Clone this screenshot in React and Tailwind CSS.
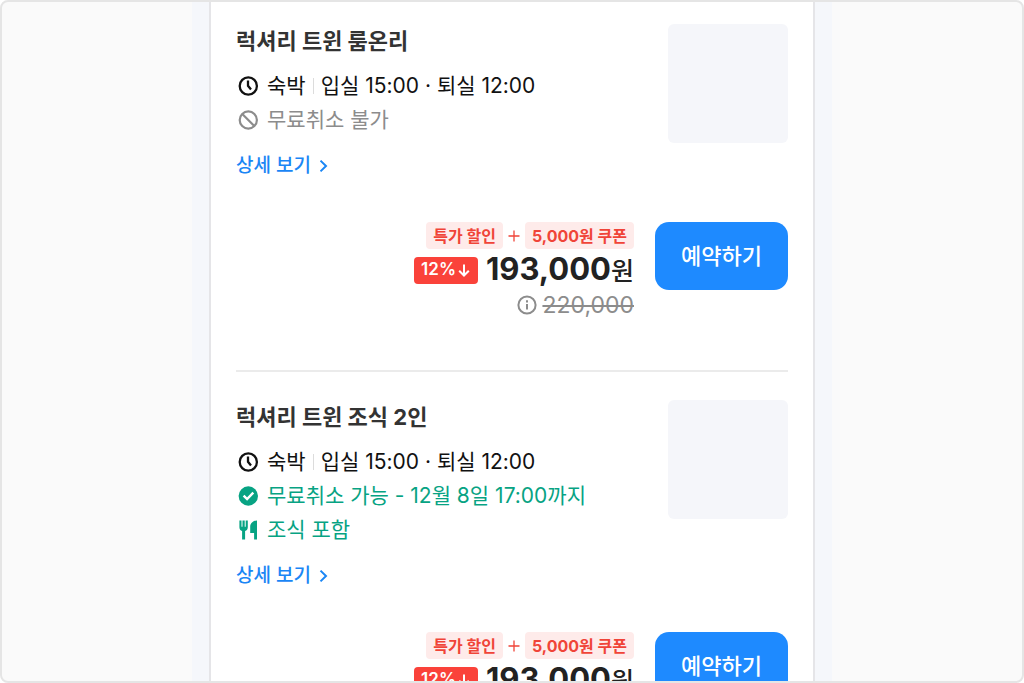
const FONT = "font-[Inter,'Noto_Sans_CJK_KR',sans-serif]";

function ClockIcon() {
  return (
    <svg viewBox="0 0 24 24" className="size-6 shrink-0" fill="none" stroke="currentColor" strokeWidth="2.3" aria-hidden="true">
      <circle cx="12.3" cy="12" r="8.6" />
      <path d="M12 6.600v5.200l3 3.600" />
    </svg>
  );
}

function BlockedIcon() {
  return (
    <svg viewBox="0 0 24 24" className="size-6 shrink-0" fill="none" stroke="currentColor" strokeWidth="2.2" aria-hidden="true">
      <circle cx="12.3" cy="12" r="8.6" />
      <path d="M6.3 6l12 12" />
    </svg>
  );
}

function CheckIcon() {
  return (
    <svg viewBox="0 0 24 24" className="size-6 shrink-0" fill="none" aria-hidden="true">
      <circle cx="12.3" cy="12" r="9.7" fill="currentColor" />
      <path d="M7.6 11.600l3.500 3.500 6.200-6.400" stroke="white" strokeWidth="2.4" />
    </svg>
  );
}

function MealIcon() {
  return (
    <svg viewBox="0 0 24 24" className="size-6 shrink-0" fill="currentColor" aria-hidden="true">
      <path d="M3.400 2.400h2.100v6.400h1V2.400h2.200v6.400h1V2.400h2.100v6.800c0 2-1 3.300-2.700 3.800V21.600H6.100V13C4.400 12.500 3.400 11.200 3.400 9.200z" />
      <path d="M21 2.400v19.200h-2.900v-6.600h-3.900V8.600c0-3.200 2.700-5.900 6.800-6.200z" />
    </svg>
  );
}

function InfoIcon() {
  return (
    <svg viewBox="0 0 24 24" className="size-6 shrink-0" fill="none" stroke="currentColor" strokeWidth="2" aria-hidden="true">
      <circle cx="12" cy="12" r="8.600" />
      <path d="M12 11v5.600" />
      <path d="M12 7.200v2.200" />
    </svg>
  );
}

function InfoRow({ icon, className, children }) {
  return (
    <li className={`flex h-[34px] items-center gap-[7px] ${className}`}>
      {icon}
      <span className="flex items-center">{children}</span>
    </li>
  );
}

function Room({ title, benefits }) {
  return (
    <article className="pb-[51px]">
      <div className="flex items-start justify-between">
        <div>
          <h2 className="text-[22px] leading-[34px] font-bold text-[#333333]">{title}</h2>
          <ul className="mt-[11px] text-[21px] leading-[34px]">
            <InfoRow icon={<ClockIcon />} className="text-[#111111]">
              <span>숙박</span>
              <span className="mx-[7px] h-4 w-px bg-[#dcdcdc]" />
              <span>입실 15:00 · 퇴실 12:00</span>
            </InfoRow>
            {benefits}
          </ul>
          <a href="#detail" className="mt-3 flex h-[34px] items-center gap-1 text-[19px] font-medium text-[#1a86f5]">
            상세 보기
            <svg viewBox="0 0 16 16" className="size-4" fill="none" stroke="currentColor" strokeWidth="2" aria-hidden="true">
              <path d="M5.500 2.600L11 8l-5.500 5.400" />
            </svg>
          </a>
        </div>
        <div className="h-[119px] w-[120px] shrink-0 rounded-[6px] bg-[#f5f6fa]" />
      </div>

      <div className="mt-[39px] flex items-start justify-end gap-[21px]">
        <div className="flex flex-col items-end">
          <div className="flex h-[27px] items-center text-[16px] font-bold text-[#f04438]">
            <span className="flex h-[27px] items-center rounded-[4px] bg-[#feebea] px-[7px]">특가 할인</span>
            <svg viewBox="0 0 12 12" className="mx-[5px] size-3" fill="none" stroke="currentColor" strokeWidth="1.300" aria-hidden="true">
              <path d="M6 .5v11M.5 6h11" />
            </svg>
            <span className="flex h-[27px] items-center rounded-[4px] bg-[#feebea] px-[7px]">5,000원 쿠폰</span>
          </div>
          <div className="flex h-[42px] items-center gap-2">
            <span className="flex h-[27px] items-center rounded-[4px] bg-[#fa423a] px-[7px] text-[17px] font-semibold text-white">
              12%
              <svg viewBox="0 0 14 14" className="ml-px size-[14px]" fill="none" stroke="currentColor" strokeWidth="2" aria-hidden="true">
                <path d="M7 1.500v11M2.200 7.700L7 12.500l4.800-4.800" />
              </svg>
            </span>
            <strong className="flex items-baseline text-[31px] leading-[42px] font-bold text-[#222222]">
              193,000<span className="text-[25px] font-medium">원</span>
            </strong>
          </div>
          <div className="flex h-[28px] items-center gap-[3px] text-[#8c8c8c]">
            <InfoIcon />
            <del className="text-[23px] leading-[28px]">220,000</del>
          </div>
        </div>
        <button type="button" className="h-[68px] w-[133px] rounded-[14px] bg-[#1e8aff] text-[22px] font-medium text-white">
          예약하기
        </button>
      </div>
    </article>
  );
}

export default function App() {
  return (
    <div className={`flex h-screen justify-center overflow-hidden rounded-[8px] border-2 border-[#e5e5e5] bg-[#fafafa] ${FONT}`}>
      <div className="w-full max-w-[640px] bg-[#f5f7fb] px-[17px]">
        <main className="min-h-full border-x-2 border-[#e5e5e8] bg-white px-[25px] pt-[22px]">
          <Room
            title="럭셔리 트윈 룸온리"
            benefits={
              <InfoRow icon={<BlockedIcon />} className="text-[#8c8c8c]">무료취소 불가</InfoRow>
            }
          />
          <hr className="mb-7 border-t-2 border-[#ebebeb]" />
          <Room
            title="럭셔리 트윈 조식 2인"
            benefits={
              <>
                <InfoRow icon={<CheckIcon />} className="text-[#07a383]">무료취소 가능 - 12월 8일 17:00까지</InfoRow>
                <InfoRow icon={<MealIcon />} className="text-[#07a383]">조식 포함</InfoRow>
              </>
            }
          />
        </main>
      </div>
    </div>
  );
}
